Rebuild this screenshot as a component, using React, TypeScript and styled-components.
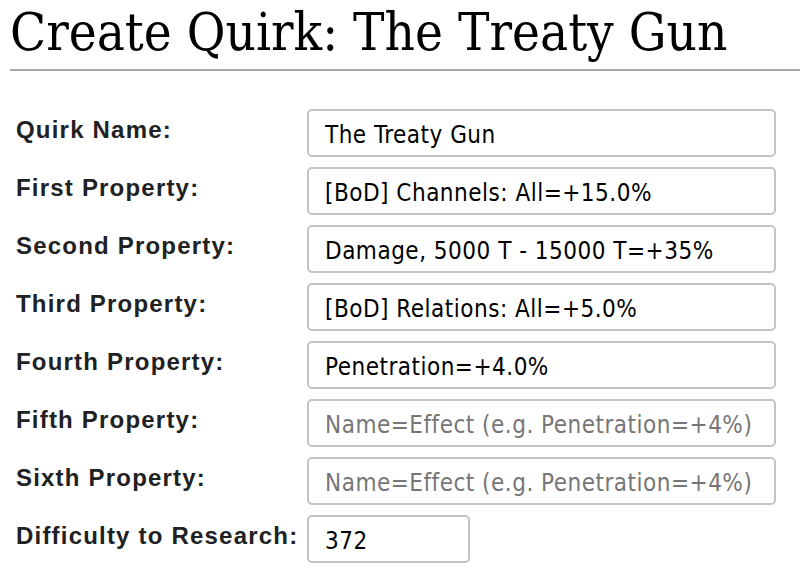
import React from "react";
import styled, { createGlobalStyle } from "styled-components";

const Global = createGlobalStyle`
  html, body { margin: 0; padding: 0; background: #ffffff; }
  body { font-family: "Liberation Sans", Arial, sans-serif; color: #202122; }
`;

const Page = styled.div`
  padding: 0 0 0 10px;
  overflow: hidden;
`;

const Title = styled.h1`
  margin: 0;
  padding: 0 0 5px 0;
  font-family: "DejaVu Serif", Georgia, serif;
  font-stretch: condensed;
  font-weight: normal;
  font-size: 52.5px;
  line-height: 64px;
  color: #000;
  border-bottom: 2px solid #a2a9b1;
`;

const Form = styled.div`
  display: grid;
  grid-template-columns: 291px 469px;
  row-gap: 10px;
  padding: 38px 0 0 6px;
  align-items: center;
`;

const Label = styled.label`
  font-family: "Liberation Sans", Arial, sans-serif;
  font-weight: bold;
  font-size: 24px;
  letter-spacing: 1.2px;
  color: #202122;
  padding-bottom: 7px;
  white-space: nowrap;
`;

const Field = styled.input<{ $w?: number }>`
  box-sizing: border-box;
  width: ${(p) => (p.$w ? `${p.$w}px` : "100%")};
  height: 48px;
  margin: 0;
  padding: 4px 16px 0 16px;
  border: 2px solid #c4c4c4;
  border-radius: 5px;
  font-family: "DejaVu Sans", sans-serif;
  font-stretch: condensed;
  font-size: 24px;
  letter-spacing: 0.5px;
  color: #000;
  background: #fff;
  outline: none;
  &::placeholder { color: #767676; opacity: 1; }
`;

const rows: { label: string; value?: string; placeholder?: string; w?: number }[] = [
  { label: "Quirk Name:", value: "The Treaty Gun" },
  { label: "First Property:", value: "[BoD] Channels: All=+15.0%" },
  { label: "Second Property:", value: "Damage, 5000 T - 15000 T=+35%" },
  { label: "Third Property:", value: "[BoD] Relations: All=+5.0%" },
  { label: "Fourth Property:", value: "Penetration=+4.0%" },
  { label: "Fifth Property:", placeholder: "Name=Effect (e.g. Penetration=+4%)" },
  { label: "Sixth Property:", placeholder: "Name=Effect (e.g. Penetration=+4%)" },
  { label: "Difficulty to Research:", value: "372", w: 163 },
];

export default function App() {
  return (
    <Page>
      <Global />
      <Title>Create Quirk: The Treaty Gun</Title>
      <Form>
        {rows.map((r) => (
          <React.Fragment key={r.label}>
            <Label>{r.label}</Label>
            <Field
              $w={r.w}
              defaultValue={r.value}
              placeholder={r.placeholder}
            />
          </React.Fragment>
        ))}
      </Form>
    </Page>
  );
}
